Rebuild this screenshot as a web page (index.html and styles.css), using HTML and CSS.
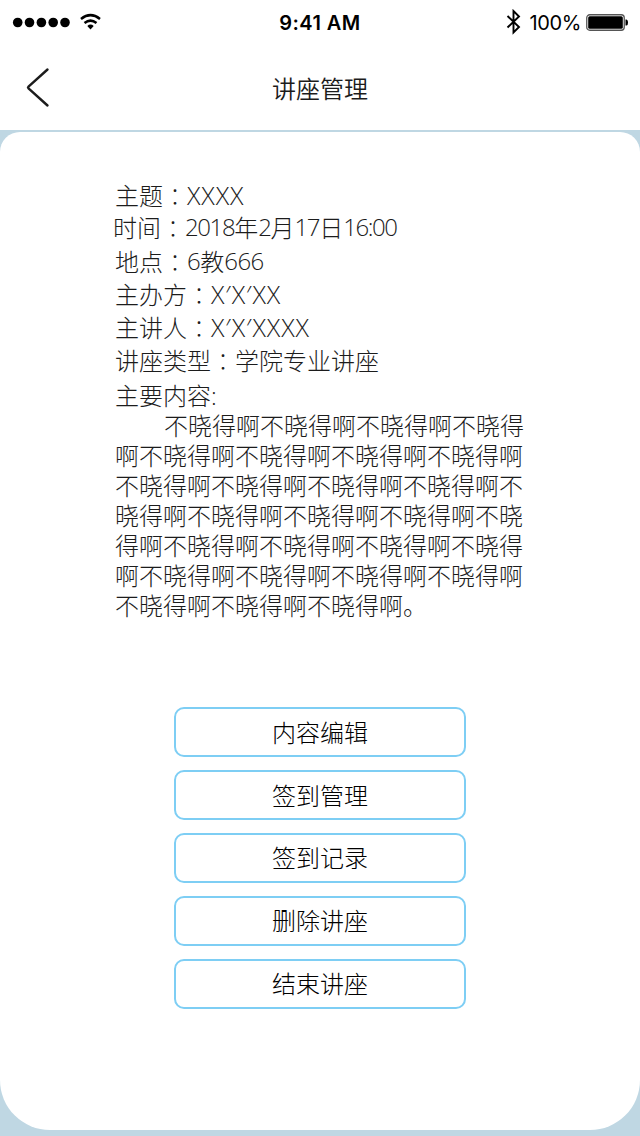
FILE: index.html
```html
<!DOCTYPE html>
<html lang="zh-CN">
<head>
<meta charset="utf-8">
<title>讲座管理</title>
<link rel="stylesheet" href="styles.css">
</head>
<body>
<header class="top">
  <div class="status">
    <svg class="signal" width="104" height="44" viewBox="0 0 104 44">
      <circle cx="17.7" cy="22.5" r="4.8"/><circle cx="29.5" cy="22.5" r="4.8"/><circle cx="41.4" cy="22.5" r="4.8"/><circle cx="53.2" cy="22.5" r="4.8"/><circle cx="65" cy="22.5" r="4.8"/>
      <path d="M81 18.9Q90.5 11.3 100 18.9" fill="none" stroke="#000" stroke-width="2.5"/>
      <path d="M84.5 23Q90.5 18.2 96.5 23" fill="none" stroke="#000" stroke-width="2.5"/>
      <path d="M87.3 26Q90.5 23.2 93.7 26L90.5 29.5Z"/>
    </svg>
    <span class="clock">9:41 AM</span>
    <div class="power">
      <svg class="bluetooth" width="16" height="26" viewBox="0 0 16 26"><path d="M1.5 7L13 18L7.5 23.5V2L13 7.5L1.5 18.5" fill="none" stroke="#000" stroke-width="1.9"/></svg>
      <span class="percent">100%</span>
      <svg class="battery" width="44" height="18" viewBox="0 0 44 18"><rect x=".75" y=".75" width="37.5" height="15.5" rx="3" fill="none" stroke="#555" stroke-width="1.3"/><rect x="2.2" y="2.2" width="34.6" height="12.6" rx="1.5"/><path d="M39.5 5.5H40.5Q42 6 42 8.5T40.5 11.5H39.5Z"/></svg>
    </div>
  </div>
  <div class="nav">
    <svg class="back" width="28" height="44" viewBox="0 0 28 44"><path d="M22.5 4.5L3.5 21.5Q2.5 22.5 3.5 23.5L22.5 40.5" fill="none" stroke="#1c1c1c" stroke-width="2.4" stroke-linecap="round"/></svg>
    <h1 class="title">讲座管理</h1>
  </div>
</header>
<main class="card">
  <section class="info">
    <p class="row">主题<span class="colon">：</span><span class="latin">XXXX</span></p>
    <p class="row row-time">时间<span class="colon">：</span><span class="digits">2018</span>年<span class="digits">2</span>月<span class="digits">17</span>日<span class="digits">16:00</span></p>
    <p class="row">地点<span class="colon">：</span><span class="digits room">6</span>教<span class="digits room">666</span></p>
    <p class="row">主办方<span class="colon">：</span><span class="latin">X′X′XX</span></p>
    <p class="row">主讲人<span class="colon">：</span><span class="latin">X′X′XXXX</span></p>
    <p class="row">讲座类型<span class="colon">：</span>学院专业讲座</p>
    <p class="row row-content">主要内容:</p>
    <p class="body">不晓得啊不晓得啊不晓得啊不晓得<br>啊不晓得啊不晓得啊不晓得啊不晓得啊<br>不晓得啊不晓得啊不晓得啊不晓得啊不<br>晓得啊不晓得啊不晓得啊不晓得啊不晓<br>得啊不晓得啊不晓得啊不晓得啊不晓得<br>啊不晓得啊不晓得啊不晓得啊不晓得啊<br>不晓得啊不晓得啊不晓得啊。</p>
  </section>
  <nav class="actions">
    <button class="action">内容编辑</button>
    <button class="action">签到管理</button>
    <button class="action raised">签到记录</button>
    <button class="action raised">删除讲座</button>
    <button class="action raised">结束讲座</button>
  </nav>
</main>
</body>
</html>
```
FILE: styles.css
```css
* { box-sizing: border-box; }
body {
  margin: 0;
  height: 1136px;
  background: #bfd7e3;
  color: #1c1c1c;
  font: 300 24px/32px "Open Sans", "Noto Sans CJK SC", sans-serif;
}
p, h1 { margin: 0; }
svg { display: block; }
.top { height: 130px; background: #fff; }
.status {
  display: grid;
  grid-template-columns: 1fr auto 1fr;
  align-items: center;
  height: 44px;
  color: #000;
  font-family: Inter, sans-serif;
}
.clock { font-size: 20px; font-weight: 600; letter-spacing: .45px; padding-top: 1px; }
.power { display: flex; align-items: center; justify-content: flex-end; padding-right: 10px; }
.bluetooth { margin-right: 8px; }
.percent { font-size: 20px; font-weight: 400; margin-right: 5px; padding-top: 1px; white-space: nowrap; letter-spacing: -.4px; }
.battery { margin-top: 2px; }
.nav {
  display: grid;
  grid-template-columns: 1fr auto 1fr;
  align-items: center;
  height: 86px;
}
.back { margin-left: 25px; }
.title { font-size: 24px; line-height: 32px; font-weight: 350; font-family: "Noto Sans CJK SC", sans-serif; padding-top: 2px; }
.card {
  margin-top: 2px;
  height: 998px;
  padding-top: 47px;
  background: #fff;
  border-radius: 20px 20px 50px 50px;
}
.info { margin-left: 115px; height: 528px; }
.row { height: 33px; line-height: 34px; white-space: nowrap; }
.row:first-child { height: 32px; }
.row-time { height: 34px; margin-left: -2px; }
.row:nth-child(6) { height: 36px; }
.row-content { height: 31px; line-height: 32px; }
.colon {
  display: inline-block;
  width: 24px;
  height: 32px;
  padding-left: 6px;
  line-height: 30px;
  vertical-align: top;
  font-weight: 100;
  font-family: "Noto Sans CJK SC", sans-serif;
  font-feature-settings: "halt";
}
.latin, .digits { display: inline-block; height: 32px; line-height: 32px; vertical-align: top; }
.latin { font-size: 25px; letter-spacing: .9px; }
.digits { letter-spacing: -1.4px; }
.room { letter-spacing: -.5px; }
.body { line-height: 30px; text-indent: 49px; white-space: nowrap; }
.actions { display: flex; flex-direction: column; align-items: center; gap: 13px; }
.action {
  width: 292px;
  height: 50px;
  padding: 0 0 1px;
  border: 2px solid #7ecef4;
  border-radius: 10px;
  background: #fff;
  color: #000;
  font: 300 24px/32px "Noto Sans CJK SC", sans-serif;
}
.raised { padding-bottom: 3px; }
```
